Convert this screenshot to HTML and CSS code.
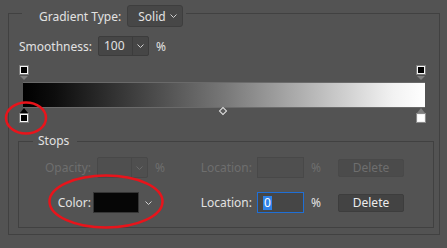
FILE: index.html
```html
<!DOCTYPE html>
<html lang="en">
<head>
  <meta charset="UTF-8">
  <meta name="viewport" content="width=device-width, initial-scale=1.0">
  <title>Gradient Editor</title>
  <link rel="stylesheet" href="styles.css">
</head>
<body>
  <fieldset class="group gradient">
    <legend class="gradient-title">
      <div class="title-row">
        <span class="label">Gradient Type:</span>
        <span class="select">Solid
          <svg class="chevron" viewBox="0 0 7 4"><polyline points="0.5,0.5 3.5,3.5 6.5,0.5"/></svg>
        </span>
      </div>
    </legend>

    <div class="field-row">
      <span class="label">Smoothness:</span>
      <span class="combo">
        <span class="combo-value">100</span>
        <span class="combo-arrow"><svg class="chevron" viewBox="0 0 7 4"><polyline points="0.5,0.5 3.5,3.5 6.5,0.5"/></svg></span>
      </span>
      <span class="unit">%</span>
    </div>

    <!-- Rampa de degradado con sus paradas -->
    <div class="ramp">
      <span class="stop stop-top stop-left"><span class="swatch black"></span></span>
      <span class="stop stop-top stop-right"><span class="swatch black"></span></span>
      <div class="ramp-bar"></div>
      <span class="midpoint"></span>
      <span class="stop stop-bottom stop-left selected"><span class="swatch black"></span></span>
      <span class="stop stop-bottom stop-right"><span class="swatch white"></span></span>
    </div>

    <fieldset class="group stops">
      <legend class="stops-title">Stops</legend>

      <div class="stop-row disabled">
        <span class="label label-first">Opacity:</span>
        <span class="combo combo-small">
          <span class="combo-value"></span>
          <span class="combo-arrow"><svg class="chevron" viewBox="0 0 7 4"><polyline points="0.5,0.5 3.5,3.5 6.5,0.5"/></svg></span>
        </span>
        <span class="unit unit-fixed">%</span>
        <span class="label label-location">Location:</span>
        <span class="text-input"></span>
        <span class="unit unit-fixed">%</span>
        <span class="button">Delete</span>
      </div>

      <div class="stop-row">
        <span class="label label-first">Color:</span>
        <span class="color-swatch"></span>
        <span class="color-arrow"><svg class="chevron" viewBox="0 0 7 4"><polyline points="0.5,0.5 3.5,3.5 6.5,0.5"/></svg></span>
        <span class="label label-location">Location:</span>
        <span class="text-input active"><span class="selection">0</span></span>
        <span class="unit unit-fixed">%</span>
        <span class="button">Delete</span>
      </div>
    </fieldset>
  </fieldset>

  <!-- Marcas rojas de la captura -->
  <svg class="annotations" viewBox="0 0 447 248">
    <ellipse cx="26" cy="118" rx="20" ry="15.5"/>
    <ellipse cx="106" cy="201.5" rx="56.5" ry="26"/>
  </svg>
</body>
</html>
```

FILE: styles.css
```css
/* Estilo general */
body {
  margin: 0;
  background-color: #535353;
  color: #e2e2e2;
  font-family: "Noto Sans", "Open Sans", sans-serif;
  font-size: 12px;
  position: relative;
  height: 248px;
  overflow: hidden;
}

.group {
  border: 1px solid #414141;
  min-width: 0;
}

/* Grupo principal */
.gradient {
  margin: -1px 7px 0 8px;
  padding: 9px 5px 6px 10px;
}

.gradient-title {
  margin-left: 3px;
  padding: 6px 3px 0 17px;
}

.title-row {
  display: flex;
  align-items: center;
  gap: 6px;
}

.select {
  display: flex;
  align-items: center;
  justify-content: space-between;
  box-sizing: border-box;
  width: 56px;
  height: 22px;
  padding: 0 5px 0 10px;
  background-color: #474747;
  border: 1px solid #3e3e3e;
  border-radius: 3px;
}

.chevron {
  width: 7px;
  height: 4px;
  fill: none;
  stroke: #cfcfcf;
  stroke-width: 1;
}

.field-row {
  display: flex;
  align-items: center;
  height: 20px;
}

.combo {
  display: flex;
  box-sizing: border-box;
  width: 51px;
  height: 20px;
  margin-left: 6px;
  background-color: #464646;
  border: 1px solid #3c3c3c;
  border-radius: 2px;
}

.combo-value {
  flex: 1;
  padding-left: 5px;
  line-height: 18px;
}

.combo-arrow {
  display: flex;
  align-items: center;
  justify-content: center;
  width: 15px;
  border-left: 1px solid #3c3c3c;
}

.unit {
  margin-left: 7px;
}

.unit-fixed {
  width: 20px;
}

/* Rampa */
.ramp {
  position: relative;
  width: 407px;
  height: 59px;
  margin-top: 9px;
  box-sizing: border-box;
  padding-top: 18px;
}

.ramp-bar {
  height: 24px;
  margin: 0 1px 0 4px;
  background: linear-gradient(to right, #000 0%, #0d0d0d 8%, #777 50%, #f2f2f2 92%, #fff 100%);
  box-shadow: 0 1px 0 #6a6a6a, 0 -1px 0 #6a6a6a;
}

.stop {
  position: absolute;
  width: 10px;
  display: flex;
  flex-direction: column;
  align-items: center;
}

.stop-left { left: 0; }
.stop-right { left: 397px; }

.stop-top { top: 0; }
.stop-bottom { top: 43px; }

.swatch {
  box-sizing: border-box;
  width: 10px;
  height: 10px;
  border: 1px solid #7c7c7c;
  box-shadow: inset 0 0 0 1px #f4f4f4;
}

.swatch.black { background-color: #000; }
.swatch.white { background-color: #fff; border-color: #8a8a8a; }

.stop-top::after,
.stop-bottom::before {
  content: "";
  width: 0;
  height: 0;
  border-left: 4px solid transparent;
  border-right: 4px solid transparent;
}

.stop-top::after {
  margin-top: 1px;
  border-top: 4px solid #7d7d7d;
}

.stop-bottom::before {
  border-bottom: 5px solid #7d7d7d;
}

.stop-bottom.selected::before {
  border-bottom-color: #000;
}

.midpoint {
  position: absolute;
  left: 201px;
  top: 43px;
  width: 4px;
  height: 4px;
  border: 1px solid #e4e4e4;
  background-color: #5a5a5a;
  transform: rotate(45deg);
}

/* Grupo de paradas */
.stops {
  margin: 9px 0 0 -1px;
  padding: 8px 0 14px 10px;
}

.stops-title {
  margin-left: 4px;
  padding: 0 8px 0 5px;
  line-height: 16px;
}

.stop-row {
  display: flex;
  align-items: center;
  height: 21px;
}

.stop-row + .stop-row {
  margin-top: 14px;
}

.label-first {
  width: 62px;
  text-align: right;
}

.label-location {
  width: 77px;
  text-align: right;
}

.combo-small {
  height: 21px;
}

.text-input {
  box-sizing: border-box;
  width: 47px;
  height: 21px;
  margin-left: 5px;
  padding-left: 5px;
  display: flex;
  align-items: center;
  background-color: #464646;
  border: 1px solid #3c3c3c;
}

.text-input.active {
  border-color: #1f6fd6;
}

.selection {
  background-color: #2f82e8;
  color: #fff;
  line-height: 14px;
  padding: 0 1px;
}

.button {
  box-sizing: border-box;
  width: 66px;
  height: 18px;
  margin-left: 7px;
  display: flex;
  align-items: center;
  justify-content: center;
  background-color: #434343;
  border: 1px solid #3d3d3d;
  border-radius: 2px;
  color: #ececec;
}

.color-swatch {
  box-sizing: border-box;
  width: 46px;
  height: 21px;
  margin-left: 2px;
  background-color: #060606;
  border: 1px solid #353535;
}

.color-arrow {
  width: 30px;
  padding-left: 6px;
  display: flex;
  align-items: center;
}

/* Controles deshabilitados */
.disabled {
  color: #6e6e6e;
}

.disabled .combo,
.disabled .text-input {
  background-color: #4f4f4f;
  border-color: #484848;
}

.disabled .combo-arrow {
  border-left-color: #484848;
}

.disabled .chevron {
  stroke: #6a6a6a;
}

.disabled .button {
  background-color: #4b4b4b;
  border-color: #494949;
  color: #6e6e6e;
}

/* Marcas rojas */
.annotations {
  position: absolute;
  left: 0;
  top: 0;
  width: 447px;
  height: 248px;
  pointer-events: none;
  fill: none;
  stroke: #e8141b;
  stroke-width: 2.5;
}
```
